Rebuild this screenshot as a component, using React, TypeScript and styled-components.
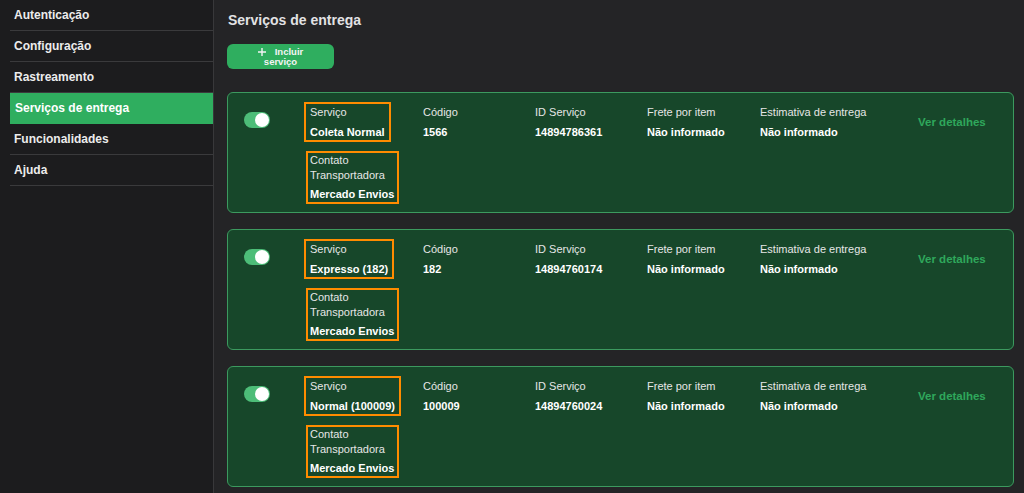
import React from "react";
import styled, { createGlobalStyle } from "styled-components";

const GlobalStyle = createGlobalStyle`
  html, body { margin: 0; padding: 0; background: #242426; }
  body { font-family: "Liberation Sans", Arial, sans-serif; }
  * { box-sizing: border-box; }
`;

const Layout = styled.div`
  display: flex;
  height: 493px;
  overflow: hidden;
  background: #242426;
`;

const Sidebar = styled.nav`
  width: 214px;
  flex-shrink: 0;
  background: #1c1c1e;
  border-right: 1px solid #38383a;
  padding-left: 10px;
`;

const NavItem = styled.div<{ $active?: boolean }>`
  height: 31px;
  padding: 7px 4px 0 ${(p) => (p.$active ? "5px" : "4px")};
  border-bottom: 1px solid ${(p) => (p.$active ? "#2fae5f" : "#3a3a3c")};
  font-size: 12px;
  font-weight: 700;
  line-height: 16px;
  color: ${(p) => (p.$active ? "#ffffff" : "#ececec")};
  background: ${(p) => (p.$active ? "#2fae5f" : "transparent")};
`;

const Main = styled.main`
  flex: 1;
  padding: 10px 10px 0 13px;
`;

const Title = styled.h1`
  margin: 0 0 0 1px;
  font-size: 14px;
  line-height: 20px;
  font-weight: 700;
  color: #e2e2e4;
`;

const AddButton = styled.button`
  display: block;
  margin: 14px 0 23px;
  width: 107px;
  height: 25px;
  padding: 0 27px;
  border: none;
  border-radius: 6px;
  background: #2fae5f;
  color: #f4f4f4;
  font-family: "Liberation Sans", Arial, sans-serif;
  font-size: 9.5px;
  font-weight: 700;
  line-height: 10px;
  text-align: center;
`;

const PlusIcon = styled.svg`
  display: inline-block;
  width: 8px;
  height: 8px;
  margin-right: 9px;
  vertical-align: -1px;
`;

const Card = styled.section`
  display: flex;
  align-items: flex-start;
  background: #17472a;
  border: 1px solid #3c9a5f;
  border-radius: 6px;
  padding: 9px 10px 8px 16px;
  margin-bottom: 16px;
`;

const ToggleCell = styled.div`
  width: 60px;
  flex-shrink: 0;
  padding-top: 10px;
`;

const Toggle = styled.span`
  display: block;
  position: relative;
  width: 26px;
  height: 16px;
  border-radius: 8px;
  background: #4dbd78;
`;

const Knob = styled.span`
  position: absolute;
  right: 1px;
  top: 1px;
  width: 14px;
  height: 14px;
  border-radius: 50%;
  background: #ffffff;
`;

const Column = styled.div<{ $w: number }>`
  width: ${(p) => p.$w}px;
  flex-shrink: 0;
  display: flex;
  flex-direction: column;
  align-items: flex-start;
`;

const Field = styled.div`
  padding-top: 3px;
`;

const HighlightBox = styled.div<{ $second?: boolean }>`
  border: 2px solid #ff8c00;
  padding: ${(p) => (p.$second ? "0 3px 0 2px" : "1px 4px 0 4px")};
  margin-left: ${(p) => (p.$second ? "2px" : "0")};
  margin-top: ${(p) => (p.$second ? "9px" : "0")};
`;

const Label = styled.div`
  font-size: 11px;
  line-height: 15px;
  color: #e6e6e6;
  white-space: pre-line;
`;

const Value = styled.div<{ $gap?: number }>`
  margin-top: ${(p) => p.$gap ?? 4}px;
  font-size: 11px;
  line-height: 16px;
  font-weight: 700;
  color: #ffffff;
  white-space: nowrap;
`;

const DetailsLink = styled.a`
  margin-top: 12px;
  font-size: 11.5px;
  line-height: 16px;
  font-weight: 700;
  color: #2fa85c;
  text-decoration: none;
  white-space: nowrap;
`;

type Service = {
  name: string;
  code: string;
  id: string;
};

const services: Service[] = [
  { name: "Coleta Normal", code: "1566", id: "14894786361" },
  { name: "Expresso (182)", code: "182", id: "14894760174" },
  { name: "Normal (100009)", code: "100009", id: "14894760024" },
];

const navItems = [
  "Autenticação",
  "Configuração",
  "Rastreamento",
  "Serviços de entrega",
  "Funcionalidades",
  "Ajuda",
];

function ServiceCard({ s }: { s: Service }) {
  return (
    <Card>
      <ToggleCell>
        <Toggle>
          <Knob />
        </Toggle>
      </ToggleCell>
      <Column $w={119}>
        <HighlightBox>
          <Label>Serviço</Label>
          <Value>{s.name}</Value>
        </HighlightBox>
        <HighlightBox $second>
          <Label>{"Contato\nTransportadora"}</Label>
          <Value $gap={3}>Mercado Envios</Value>
        </HighlightBox>
      </Column>
      <Column $w={112}>
        <Field>
          <Label>Código</Label>
          <Value>{s.code}</Value>
        </Field>
      </Column>
      <Column $w={112}>
        <Field>
          <Label>ID Serviço</Label>
          <Value>{s.id}</Value>
        </Field>
      </Column>
      <Column $w={113}>
        <Field>
          <Label>Frete por item</Label>
          <Value>Não informado</Value>
        </Field>
      </Column>
      <Column $w={158}>
        <Field>
          <Label>Estimativa de entrega</Label>
          <Value>Não informado</Value>
        </Field>
      </Column>
      <DetailsLink href="#">Ver detalhes</DetailsLink>
    </Card>
  );
}

export default function App() {
  return (
    <>
      <GlobalStyle />
      <Layout>
        <Sidebar>
          {navItems.map((n) => (
            <NavItem key={n} $active={n === "Serviços de entrega"}>
              {n}
            </NavItem>
          ))}
        </Sidebar>
        <Main>
          <Title>Serviços de entrega</Title>
          <AddButton>
            <PlusIcon viewBox="0 0 8 8">
              <path d="M4 0v8M0 4h8" stroke="#f4f4f4" strokeWidth="1.4" />
            </PlusIcon>
            Incluir serviço
          </AddButton>
          {services.map((s) => (
            <ServiceCard key={s.id} s={s} />
          ))}
        </Main>
      </Layout>
    </>
  );
}
